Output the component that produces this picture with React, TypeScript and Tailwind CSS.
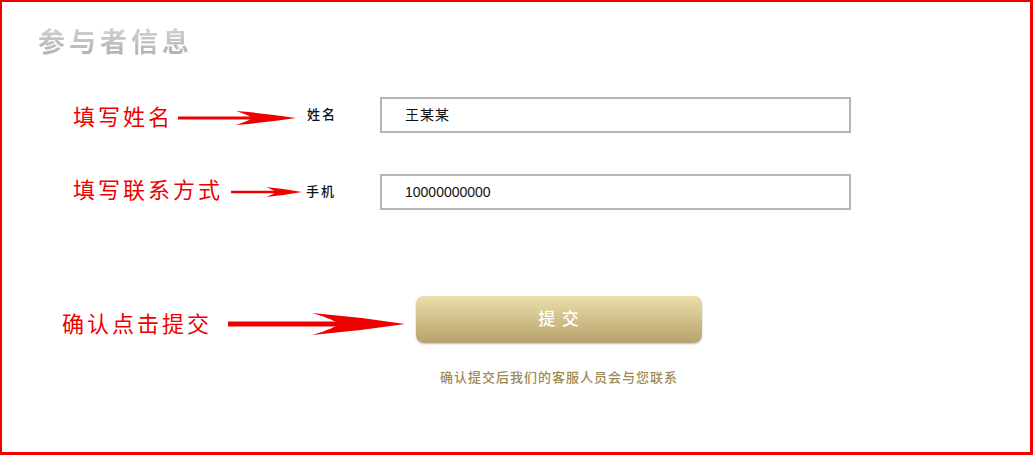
import React from 'react'

type ArrowProps = {
  w: number
  h: number
  head: number
  notch: number
  shaft: number
}

// 红色标注箭头（箭杆 + 燕尾箭头）
function Arrow({ w, h, head, notch, shaft }: ArrowProps) {
  const mid = h / 2
  return (
    <svg width={w} height={h} viewBox={`0 0 ${w} ${h}`} className="block shrink-0">
      <rect x={0} y={mid - shaft / 2} width={notch + 2} height={shaft} fill="#ee0000" />
      <path
        d={`M${head} 0 Q${(head + w) / 2} ${mid * 0.35} ${w} ${mid} Q${(head + w) / 2} ${h - mid * 0.35} ${head} ${h} Q${notch - 2} ${mid + mid * 0.35} ${notch} ${mid} Q${notch - 2} ${mid - mid * 0.35} ${head} 0 Z`}
        fill="#ee0000"
      />
    </svg>
  )
}

export default function App() {
  return (
    <div className="w-[1033px] h-[455px] bg-white border-t-2 border-l-2 border-r-[3px] border-b-[3px] border-[#f00000] font-['Liberation_Sans','Noto_Sans_CJK_SC',sans-serif] overflow-hidden">
      {/* 标题 */}
      <h1 className="ml-[36px] mt-[22px] text-[27px] leading-[38px] font-bold tracking-[4px] bg-gradient-to-b from-[#d6d6d6] to-[#aaaaaa] bg-clip-text text-transparent w-fit">
        参与者信息
      </h1>

      {/* 姓名 */}
      <div className="mt-[35px] flex items-center h-[36px]">
        <div className="w-[378px] shrink-0 flex items-center">
          <span className="ml-[71px] text-[22px] leading-[26px] tracking-[3px] text-[#ee0000] mt-[6px]">填写姓名</span>
          <div className="ml-[5px] mt-[6px]">
            <Arrow w={118} h={14} head={58} notch={74} shaft={3} />
          </div>
          <span className="ml-[11px] text-[13px] tracking-[2px] font-medium text-[#111]">姓名</span>
        </div>
        <div className="w-[471px] h-[36px] border-2 border-[#b6b6b6] flex items-center pl-[23px] text-[14px] tracking-[1px] text-[#111]">
          王某某
        </div>
      </div>

      {/* 手机 */}
      <div className="mt-[41px] flex items-center h-[36px]">
        <div className="w-[378px] shrink-0 flex items-center">
          <span className="ml-[71px] text-[22px] leading-[26px] tracking-[3px] text-[#ee0000] -mt-[2px]">填写联系方式</span>
          <div className="ml-[8px]">
            <Arrow w={71} h={10} head={35} notch={45} shaft={2.5} />
          </div>
          <span className="ml-[4px] text-[13px] tracking-[2px] font-medium text-[#111]">手机</span>
        </div>
        <div className="w-[471px] h-[36px] border-2 border-[#b6b6b6] flex items-center pl-[23px] text-[14px] text-[#111]">
          10000000000
        </div>
      </div>

      {/* 提交 */}
      <div className="mt-[86px] flex items-center h-[47px]">
        <div className="w-[414px] shrink-0 flex items-center">
          <span className="ml-[60px] text-[22px] leading-[26px] tracking-[3px] text-[#ee0000] mt-[10px]">确认点击提交</span>
          <div className="ml-[16px] mt-[8px]">
            <Arrow w={177} h={22} head={84} notch={110} shaft={5} />
          </div>
        </div>
        <button className="w-[286px] h-[47px] rounded-[8px] bg-gradient-to-b from-[#ebdfab] to-[#b7a26c] shadow-[0_1px_2px_rgba(0,0,0,0.25)] text-white text-[17px] font-medium tracking-[1px]">
          提 交
        </button>
      </div>

      {/* 提示 */}
      <p className="mt-[26px] ml-[414px] w-[286px] text-center text-[13px] leading-[18px] tracking-[1px] font-medium text-[#9c8a55]">
        确认提交后我们的客服人员会与您联系
      </p>
    </div>
  )
}
